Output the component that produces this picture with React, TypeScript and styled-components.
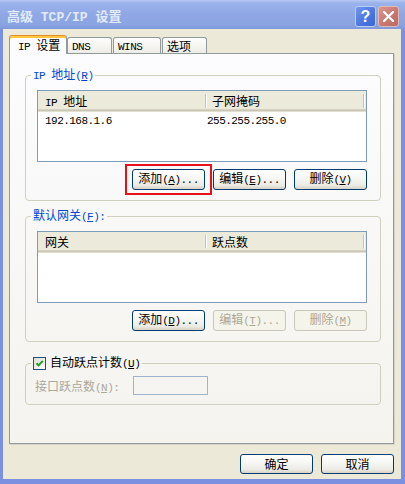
import React from "react";
import styled, { createGlobalStyle } from "styled-components";

const GlobalStyle = createGlobalStyle`
  html, body {
    margin: 0;
    padding: 0;
  }
  body {
    font-family: "Noto Sans CJK SC", "Liberation Sans", sans-serif;
    font-size: 12px;
    color: #000;
    background: #ece9d8;
  }
  * {
    box-sizing: border-box;
  }
`;

// latin runs get a monospace face so they sit like the SimSun half-width glyphs
const RUNS = /[\u2e80-\u9fff\uff00-\uffef]+|[^\u2e80-\u9fff\uff00-\uffef]+/g;
const isCJK = (s: string) => /[\u2e80-\u9fff\uff00-\uffef]/.test(s);

const Lat = styled.span`
  font-family: "Liberation Mono", monospace;
  font-size: 0.92em;
  letter-spacing: -0.05em;
`;

function withMnemonic(s: string) {
  const at = s.indexOf("&");
  if (at < 0) return s;
  return (
    <>
      {s.slice(0, at)}
      <u>{s.charAt(at + 1)}</u>
      {s.slice(at + 2)}
    </>
  );
}

function Caption({ text }: { text: string }) {
  const runs = text.match(RUNS) ?? [];
  return (
    <span>
      {runs.map((run, i) =>
        isCJK(run) ? (
          <span key={i}>{run}</span>
        ) : (
          <Lat key={i}>{withMnemonic(run)}</Lat>
        )
      )}
    </span>
  );
}

const Window = styled.div`
  width: 405px;
  height: 484px;
  display: flex;
  flex-direction: column;
  background: #ece9d8;
  overflow: hidden;
`;

const TitleBar = styled.div`
  height: 29px;
  flex: none;
  display: flex;
  align-items: center;
  justify-content: space-between;
  background: linear-gradient(
    to bottom,
    #b7c9f3 0px,
    #9bb3eb 3px,
    #8fa8e5 50%,
    #8aa3e2 85%,
    #7e98dc 100%
  );
`;

const TitleText = styled.div`
  padding-left: 7px;
  padding-top: 1px;
  color: #e2eafa;
  font-weight: bold;
  font-size: 13px;
  ${Lat} {
    font-size: 1em;
    letter-spacing: 0;
  }
`;

const Controls = styled.div`
  display: flex;
  gap: 2px;
  margin-right: 6px;
  margin-top: 4px;
`;

const CaptionButton = styled.div<{ $kind: "help" | "close" }>`
  width: 21px;
  height: 21px;
  border-radius: 3px;
  border: 1px solid ${(p) => (p.$kind === "help" ? "#b9cdf6" : "#e2b8b4")};
  background: ${(p) =>
    p.$kind === "help"
      ? "linear-gradient(135deg, #6f97ee 0%, #4a74df 60%, #3d66d4 100%)"
      : "linear-gradient(135deg, #d99690 0%, #c7766f 60%, #bb6a64 100%)"};
  display: flex;
  align-items: center;
  justify-content: center;
  color: #fff;
  font-family: "Liberation Sans", sans-serif;
  font-weight: bold;
  font-size: 16px;
  line-height: 1;
`;

const Client = styled.div`
  flex: 1;
  min-height: 0;
  display: flex;
  flex-direction: column;
  border-style: solid;
  border-color: #7b90e0;
  border-width: 0 4px 5px 3px;
  padding: 6px 7px 5px 6px;
`;

const TabStrip = styled.div`
  height: 19px;
  flex: none;
  display: flex;
  align-items: flex-end;
  margin-bottom: -1px;
  position: relative;
  z-index: 1;
`;

const Tab = styled.div<{ $active?: boolean; $w: number; $ml: number }>`
  width: ${(p) => p.$w}px;
  margin-left: ${(p) => p.$ml}px;
  height: ${(p) => (p.$active ? 19 : 16)}px;
  margin-bottom: ${(p) => (p.$active ? 0 : 1)}px;
  display: flex;
  align-items: center;
  padding-left: ${(p) => (p.$active ? 8 : 4)}px;
  padding-top: 1px;
  line-height: 14px;
  white-space: nowrap;
  border: 1px solid #919b9c;
  border-bottom: none;
  border-radius: 3px 3px 0 0;
  background: ${(p) =>
    p.$active ? "#fcfcfe" : "linear-gradient(to bottom, #fefefe, #f1f0ea 80%, #ecebe6)"};
  ${(p) =>
    p.$active &&
    `
    border-top: 1px solid #e68b2c;
    box-shadow: inset 0 2px 0 #ffc73c;
  `}
`;

const Panel = styled.div`
  flex: 1;
  min-height: 0;
  display: flex;
  flex-direction: column;
  border: 1px solid #919b9c;
  background: linear-gradient(to bottom, #fcfcfe, #f4f3ee);
  box-shadow: 1px 1px 0 #d6d3c6;
  padding: 13px 12px 0 15px;
`;

const Group = styled.fieldset<{ $mt: number }>`
  margin: ${(p) => p.$mt}px 0 0 0;
  padding: 0 13px 0 5px;
  min-width: 0;
  border: 1px solid #d0d0bf;
  border-radius: 4px;
`;

const Legend = styled.legend<{ $plain?: boolean }>`
  padding: 0 2px;
  line-height: 14px;
  color: ${(p) => (p.$plain ? "#000" : "#0046d5")};
`;

const LegendRow = styled.span`
  display: inline-flex;
  align-items: center;
  gap: 4px;
`;

const GroupBody = styled.div<{ $top: number; $bottom: number; $left: number }>`
  padding: ${(p) => `${p.$top}px 0 ${p.$bottom}px ${p.$left}px`};
`;

const List = styled.div`
  height: 72px;
  border: 1px solid #7f9db9;
  background: #fff;
  overflow: hidden;
`;

const Header = styled.div<{ $cols: string }>`
  height: 21px;
  display: grid;
  grid-template-columns: ${(p) => p.$cols} 1fr;
  background: #ebeadb;
  box-shadow: inset 0 -1px 0 #e2decd, inset 0 -2px 0 #cbc7b8, inset 0 -3px 0 #d6d2c2;
`;

const HeaderCell = styled.div<{ $pad: number }>`
  position: relative;
  padding-left: ${(p) => p.$pad}px;
  line-height: 19px;
  white-space: nowrap;
  &::after {
    content: "";
    position: absolute;
    right: 0;
    top: 3px;
    bottom: 5px;
    width: 1px;
    background: #c7c5b2;
    box-shadow: 1px 0 0 #fff;
  }
`;

const Row = styled.div<{ $cols: string }>`
  display: grid;
  grid-template-columns: ${(p) => p.$cols};
  height: 14px;
  line-height: 14px;
`;

const Cell = styled.div<{ $pad: number }>`
  padding-left: ${(p) => p.$pad}px;
  white-space: nowrap;
`;

const ButtonRow = styled.div`
  margin-top: 7px;
  display: flex;
  justify-content: flex-end;
  gap: 8px;
`;

const Button = styled.button<{ $h?: number }>`
  width: 73px;
  height: ${(p) => p.$h ?? 21}px;
  padding: 0;
  font: inherit;
  line-height: 1;
  color: #000;
  border: 1px solid #003c74;
  border-radius: 3px;
  background: linear-gradient(
    to bottom,
    #ffffff 0%,
    #f6f6f3 45%,
    #ecebe4 80%,
    #d8d2c6 100%
  );
  display: flex;
  align-items: center;
  justify-content: center;
  white-space: nowrap;
  &:disabled {
    border-color: #c9c7ba;
    background: #f5f4ea;
    color: #aca899;
  }
`;

const Annotated = styled.span`
  position: relative;
  display: inline-flex;
  &::after {
    content: "";
    position: absolute;
    left: -7px;
    right: -7px;
    top: -5px;
    bottom: -5px;
    border: 2px solid #e8101a;
    pointer-events: none;
  }
`;

const Box = styled.span`
  width: 13px;
  height: 13px;
  border: 1px solid #1c5180;
  background: linear-gradient(135deg, #dcdcd7, #ffffff);
  display: inline-flex;
`;

const MetricRow = styled.div`
  display: flex;
  align-items: center;
`;

const Dim = styled.span`
  width: 98px;
  color: #aca899;
  white-space: nowrap;
`;

const Field = styled.input`
  width: 75px;
  height: 19px;
  border: 1px solid #9fb4cd;
  background: transparent;
  padding: 0;
`;

const Footer = styled.div`
  flex: none;
  margin-top: 10px;
  display: flex;
  justify-content: flex-end;
  gap: 8px;
`;

type Column = { title: string; width: number };

function ListView({ columns, rows }: { columns: Column[]; rows: string[][] }) {
  const cols = columns.map((c) => `${c.width}px`).join(" ");
  return (
    <List>
      <Header $cols={cols}>
        {columns.map((c, i) => (
          <HeaderCell key={c.title} $pad={i === 0 ? 7 : 6}>
            <Caption text={c.title} />
          </HeaderCell>
        ))}
      </Header>
      {rows.map((r, i) => (
        <Row key={i} $cols={cols}>
          {r.map((v, j) => (
            <Cell key={j} $pad={j === 0 ? 7 : 1}>
              <Caption text={v} />
            </Cell>
          ))}
        </Row>
      ))}
    </List>
  );
}

const tabs = [
  { label: "IP 设置", w: 58, ml: 0, active: true },
  { label: "DNS", w: 45, ml: 0 },
  { label: "WINS", w: 48, ml: 1 },
  { label: "选项", w: 45, ml: 1 },
];

export default function App() {
  return (
    <>
      <GlobalStyle />
      <Window>
        <TitleBar>
          <TitleText>
            <Caption text="高级 TCP/IP 设置" />
          </TitleText>
          <Controls>
            <CaptionButton $kind="help">?</CaptionButton>
            <CaptionButton $kind="close">
              <svg width="11" height="11" viewBox="0 0 11 11">
                <path d="M1 1L10 10M10 1L1 10" stroke="#fff" strokeWidth="2.2" strokeLinecap="square" />
              </svg>
            </CaptionButton>
          </Controls>
        </TitleBar>
        <Client>
          <TabStrip>
            {tabs.map((t) => (
              <Tab key={t.label} $active={t.active} $w={t.w} $ml={t.ml}>
                <Caption text={t.label} />
              </Tab>
            ))}
          </TabStrip>
          <Panel>
            <Group $mt={0}>
              <Legend>
                <Caption text="IP 地址(&R)" />
              </Legend>
              <GroupBody $top={7} $bottom={10} $left={6}>
                <ListView
                  columns={[
                    { title: "IP 地址", width: 168 },
                    { title: "子网掩码", width: 158 },
                  ]}
                  rows={[["192.168.1.6", "255.255.255.0"]]}
                />
                <ButtonRow>
                  <Annotated>
                    <Button>
                      <Caption text="添加(&A)..." />
                    </Button>
                  </Annotated>
                  <Button>
                    <Caption text="编辑(&E)..." />
                  </Button>
                  <Button>
                    <Caption text="删除(&V)" />
                  </Button>
                </ButtonRow>
              </GroupBody>
            </Group>

            <Group $mt={7}>
              <Legend>
                <Caption text="默认网关(&F):" />
              </Legend>
              <GroupBody $top={7} $bottom={10} $left={6}>
                <ListView
                  columns={[
                    { title: "网关", width: 168 },
                    { title: "跃点数", width: 158 },
                  ]}
                  rows={[]}
                />
                <ButtonRow>
                  <Button>
                    <Caption text="添加(&D)..." />
                  </Button>
                  <Button disabled>
                    <Caption text="编辑(&T)..." />
                  </Button>
                  <Button disabled>
                    <Caption text="删除(&M)" />
                  </Button>
                </ButtonRow>
              </GroupBody>
            </Group>

            <Group $mt={13}>
              <Legend $plain>
                <LegendRow>
                  <Box>
                    <svg width="11" height="11" viewBox="0 0 11 11">
                      <path d="M2.5 5.2L4.6 7.4L8.8 2.8" fill="none" stroke="#21a121" strokeWidth="2" />
                    </svg>
                  </Box>
                  <Caption text="自动跃点计数(&U)" />
                </LegendRow>
              </Legend>
              <GroupBody $top={5} $bottom={9} $left={4}>
                <MetricRow>
                  <Dim>
                    <Caption text="接口跃点数(&N):" />
                  </Dim>
                  <Field disabled />
                </MetricRow>
              </GroupBody>
            </Group>
          </Panel>
          <Footer>
            <Button $h={20}>确定</Button>
            <Button $h={20}>取消</Button>
          </Footer>
        </Client>
      </Window>
    </>
  );
}
